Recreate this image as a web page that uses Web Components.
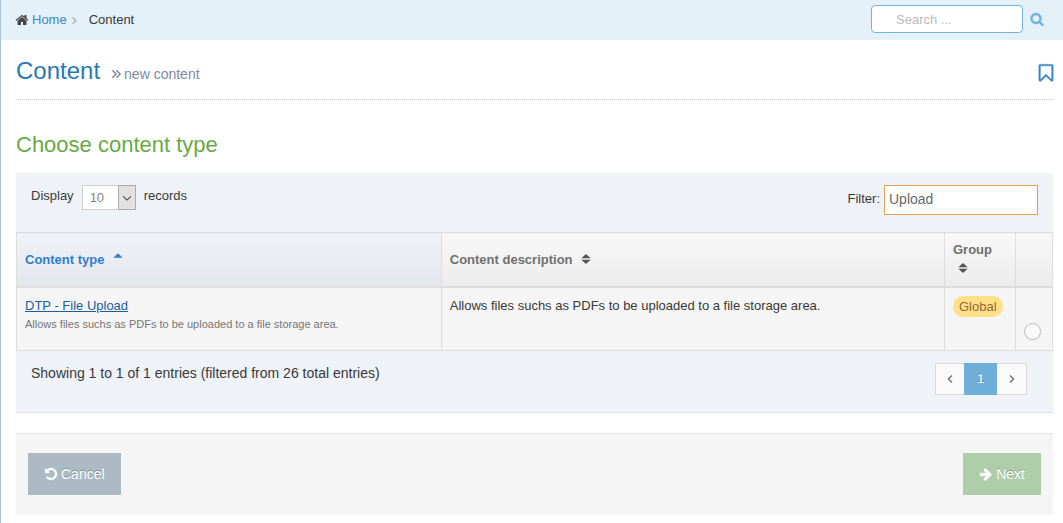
<!DOCTYPE html>
<html lang="en">
<head>
<meta charset="utf-8">
<title>Content - new content</title>
<style>
  html, body { margin: 0; }
  body {
    min-height: 100vh; box-sizing: border-box; background: #fff;
    border-left: 1px solid #a9c4d6;
    font: 13px/20px "Liberation Sans", Arial, sans-serif; color: #393939;
  }
</style>
</head>
<body>
<top-bar></top-bar>
<page-content>
  <page-heading slot="heading" sub="new content">Content</page-heading>
  <section-title>Choose content type</section-title>
  <content-table></content-table>
  <form-actions>
    <action-button icon="undo" kind="default">Cancel</action-button>
    <action-button icon="right" kind="success">Next</action-button>
  </form-actions>
</page-content>

<script>
const ICONS = {
  home: "M1472 992v480q0 26-19 45t-45 19h-384v-384h-256v384h-384q-26 0-45-19t-19-45v-480q0-1 .5-3t.5-3l575-474 575 474q1 2 1 6zm223-69l-62 74q-8 9-21 11h-3q-13 0-21-7l-692-577-692 577q-12 8-24 7-13-2-21-11l-62-74q-8-10-7-23.500t11-21.500l719-599q32-26 76-26t76 26l244 204v-195q0-14 9-23t23-9h192q14 0 23 9t9 23v408l219 182q10 8 11 21.500t-7 23.500z",
  search: "M1216 832q0-185-131.500-316.500t-316.500-131.500-316.500 131.500-131.500 316.500 131.500 316.500 316.500 131.500 316.500-131.500 131.500-316.500zm512 832q0 52-38 90t-90 38q-54 0-90-38l-343-342q-179 124-399 124-143 0-273.500-55.500t-225-150-150-225-55.500-273.500 55.500-273.500 150-225 225-150 273.500-55.500 273.500 55.500 225 150 150 225 55.500 273.500q0 220-124 399l343 343q37 37 37 90z",
  undo: "M1664 896q0 156-61 298t-164 245-245 164-298 61q-172 0-327-72.500t-264-204.500q-7-10-6.500-22.500t8.500-20.500l137-138q10-9 25-9 16 2 23 12 73 95 179 147t225 52q104 0 198.500-40.500t163.500-109.500 109.500-163.500 40.500-198.500-40.500-198.500-109.500-163.500-163.500-109.500-198.500-40.500q-98 0-188 35.500t-160 101.500l137 138q31 30 14 69-17 40-59 40h-448q-26 0-45-19t-19-45v-448q0-42 40-59 39-17 69 14l130 129q107-101 244.500-156.500t284.500-55.500q156 0 298 61t245 164 164 245 61 298z",
  right: "M1600 960q0 54-37 91l-651 651q-39 37-91 37-51 0-90-37l-75-75q-38-38-38-91t38-91l293-293h-704q-52 0-84.500-37.500t-32.500-90.500v-128q0-53 32.500-90.500t84.500-37.500h704l-293-294q-38-36-38-90t38-90l75-75q38-38 90-38 53 0 91 38l651 651q37 35 37 90z",
  bookmark: "M1408 256h-1024v1242l423-406 89-85 89 85 423 406v-1242zm12-128q23 0 44 9 33 13 52.500 41t19.500 62v1289q0 34-19.500 62t-52.500 41q-19 8-44 8-48 0-83-32l-441-424-441 424q-36 33-83 33-23 0-44-9-33-13-52.500-41t-19.500-62v-1289q0-34 19.500-62t52.500-41q21-9 44-9h1048z",
  sort: "M896 150l696 640h-1392zM896 1642l696-640h-1392z",
  up: "M896 340l696 660h-1392z"
};
const LINES = {
  next: "M650 450l440 446-440 446",
  prev: "M1140 450l-440 446 440 446",
  down: "M400 680l496 480 496-480",
  guillemet: "M70 340l540 556-540 556M670 340l540 556-540 556"
};

function define(name, render) {
  customElements.define(name, class extends HTMLElement {
    constructor() { super(); this.attachShadow({ mode: "open" }); }
    connectedCallback() { this.shadowRoot.innerHTML = render(this); }
  });
}

define("ui-icon", el => {
  const n = el.getAttribute("name"), s = el.getAttribute("size") || 14, w = el.getAttribute("weight");
  const p = ICONS[n]
    ? `<path fill="currentColor" stroke="currentColor" stroke-width="${w || 0}" d="${ICONS[n]}"/>`
    : `<path fill="none" stroke="currentColor" stroke-width="${w || 190}" d="${LINES[n]}"/>`;
  return `<style>:host{display:inline-flex;flex:none} svg{display:block;overflow:visible}</style>
    <svg width="${s}" height="${s}" viewBox="0 0 1792 1792" aria-hidden="true">${p}</svg>`;
});

define("top-bar", () => `<style>
  :host{display:flex;justify-content:space-between;align-items:center;height:40px;padding:0 19px 0 14px;box-sizing:border-box;background:#e5f1f8}
  nav,a,form{display:flex;align-items:center}
  a{color:#3c88bf;text-decoration:none;gap:3px}
  a ui-icon{color:#444}
  .sep{color:#a5b4c0;margin:0 8px 0 1px}
  form{gap:7px;height:38px;align-self:flex-start}
  input{width:152px;height:28px;box-sizing:border-box;border:1px solid #6fb3e0;border-radius:4px;padding:0 6px 0 24px;font:inherit;color:#555;background:#fff;outline:0}
  input::placeholder{color:#bbb;opacity:1}
  button{border:0;background:none;padding:0;color:#6fb3e0;display:flex}
  </style>
  <nav aria-label="Breadcrumb"><a href="#"><ui-icon name="home" size="14"></ui-icon>Home</a><ui-icon class="sep" name="next" size="13"></ui-icon><span>Content</span></nav>
  <form role="search"><input type="text" placeholder="Search ..." aria-label="Search"><button type="button" aria-label="Search"><ui-icon name="search" size="14" weight="60"></ui-icon></button></form>`);

define("page-content", () => `<style>
  :host{display:block;padding:0 10px 8px 15px}
  </style><slot name="heading"></slot><slot></slot>`);

define("page-heading", el => `<style>
  :host{display:flex;justify-content:space-between;align-items:center;height:60px;padding-top:6px;box-sizing:border-box;border-bottom:1px dotted #d0d0d0}
  h1{margin:0;font-size:24px;line-height:32px;font-weight:400;color:#2679b5;display:flex;align-items:baseline;gap:12px}
  small{font-size:14px;color:#8089a0}
  small ui-icon{vertical-align:-1px}
  button{border:0;background:none;padding:0;color:#3a87c8;display:flex;margin-right:-3px}
  </style><h1><slot></slot><small><ui-icon name="guillemet" size="12" weight="230"></ui-icon>${el.getAttribute("sub")}</small></h1>
  <button type="button" aria-label="Bookmark"><ui-icon name="bookmark" size="20" weight="50"></ui-icon></button>`);

define("section-title", () => `<style>
  :host{display:block;padding:31px 0 14px}
  h2{margin:0;font-size:22px;line-height:28px;font-weight:400;color:#69aa46}
  </style><h2><slot></slot></h2>`);

define("ui-badge", () => `<style>
  :host{display:inline-block;background:#fee188;color:#963;border-radius:10px;padding:0 6px;line-height:21px;font-size:13px}
  </style><slot></slot>`);

define("table-length", () => `<style>
  :host{display:flex;align-items:center;gap:8px;height:22px}
  .box{display:grid;grid-template-columns:1fr 18px;width:54px;height:25px;margin-top:3px}
  select{grid-area:1/1/2/3;appearance:none;border:1px solid #d0d0d0;border-radius:0;background:#fff;font:inherit;color:#858585;padding:0 7px;margin:0}
  .arrow{grid-area:1/2;display:flex;align-items:center;justify-content:center;background:#e1e1e1;border:1px solid #adadad;color:#444;pointer-events:none}
  </style><label for="n">Display</label>
  <span class="box"><select id="n"><option>10</option><option>25</option><option>50</option></select><span class="arrow"><ui-icon name="down" size="14" weight="140"></ui-icon></span></span>
  <span>records</span>`);

define("table-filter", () => `<style>
  :host{display:flex;gap:4px}
  label{line-height:27px}
  input{width:154px;height:30px;box-sizing:border-box;border:1px solid #e59f4f;padding:0 4px 2px;font:14px "Liberation Sans",Arial,sans-serif;color:#696969;background:#fff;outline:0;border-radius:0}
  </style><label for="f">Filter:</label><input id="f" type="text" value="Upload">`);

define("table-pager", () => `<style>
  :host{display:flex}
  a{display:flex;align-items:center;justify-content:center;box-sizing:border-box;width:30px;height:32px;border:1px solid #d9d9d9;background:#fafafa;color:#777;text-decoration:none}
  a:first-of-type{border-right:0;width:29px}
  a:last-of-type{border-left:0}
  a[aria-current]{width:33px;background:#6faed9;border-color:#6faed9;color:#fff;text-shadow:0 -1px 0 rgba(0,0,0,.25)}
  </style><a href="#" aria-label="Previous"><ui-icon name="prev" size="14" weight="200"></ui-icon></a><a href="#" aria-current="page">1</a><a href="#" aria-label="Next"><ui-icon name="next" size="14" weight="200"></ui-icon></a>`);

define("content-table", () => `<style>
  :host{display:block;background:#eff3f8;border-bottom:1px solid #ddd}
  .bar{display:flex;justify-content:space-between;padding:12px 15px 0}
  .top{height:47px}
  .foot{height:49px;padding-right:26px;font-size:14px}
  .foot table-pager{font-size:13px}
  .foot p{margin:0}
  table{width:100%;border-collapse:collapse;table-layout:fixed;font-size:13px;line-height:19px}
  .c1{width:41%}.c3{width:71px}.c4{width:37px}
  th,td{border:1px solid #ddd;padding:8px;text-align:left}
  th{padding-top:7px;border-bottom-width:2px;background:linear-gradient(#f8f8f8,#ececec);color:#707070;vertical-align:middle}
  th.on{background:linear-gradient(#eff3f8,#e3e7ed);color:#307ecc}
  th ui-icon{margin-left:4px;vertical-align:-1px;color:#555}
  th.on ui-icon{color:#307ecc;vertical-align:1px}
  td{background:#f5f5f5;vertical-align:top}
  td a{color:#1b5f97;text-decoration:underline}
  small{display:block;font-size:11px;color:#777}
  input{appearance:none;display:block;width:17px;height:17px;margin:27px 0 2px;border:1px solid #bbb;border-radius:50%;background:#fafafa;box-shadow:0 1px 2px rgba(0,0,0,.05)}
  td:last-child{padding-right:0}
  </style>
  <div class="bar top"><table-length></table-length><table-filter></table-filter></div>
  <table><colgroup><col class="c1"><col><col class="c3"><col class="c4"></colgroup>
  <thead><tr><th class="on" aria-sort="ascending">Content type <ui-icon name="up" size="12"></ui-icon></th><th>Content description <ui-icon name="sort" size="12"></ui-icon></th><th>Group <ui-icon name="sort" size="12"></ui-icon></th><th aria-label="Select"></th></tr></thead>
  <tbody><tr><td><a href="#">DTP - File Upload</a><small>Allows files suchs as PDFs to be uploaded to a file storage area.</small></td><td>Allows files suchs as PDFs to be uploaded to a file storage area.</td><td><ui-badge>Global</ui-badge></td><td><input type="radio" name="type" aria-label="DTP - File Upload"></td></tr></tbody></table>
  <div class="bar foot"><p>Showing 1 to 1 of 1 entries (filtered from 26 total entries)</p><table-pager></table-pager></div>`);

define("form-actions", () => `<style>
  :host{display:flex;justify-content:space-between;margin-top:20px;padding:19px 12px 20px;background:#f5f5f5;border-top:1px solid #e5e5e5}
  </style><slot></slot>`);

define("action-button", el => `<style>
  :host{display:block}
  button{display:flex;align-items:center;gap:3px;height:42px;padding:0 16px;border:0;border-radius:0;font:14px/20px "Liberation Sans",Arial,sans-serif;color:#fff;text-shadow:0 -1px 0 rgba(0,0,0,.25);background:${el.getAttribute("kind") === "success" ? "#aeceaa" : "#abbac3"}}
  </style><button type="button"><ui-icon name="${el.getAttribute("icon")}" size="14" weight="50"></ui-icon><slot></slot></button>`);
</script>
</body>
</html>
